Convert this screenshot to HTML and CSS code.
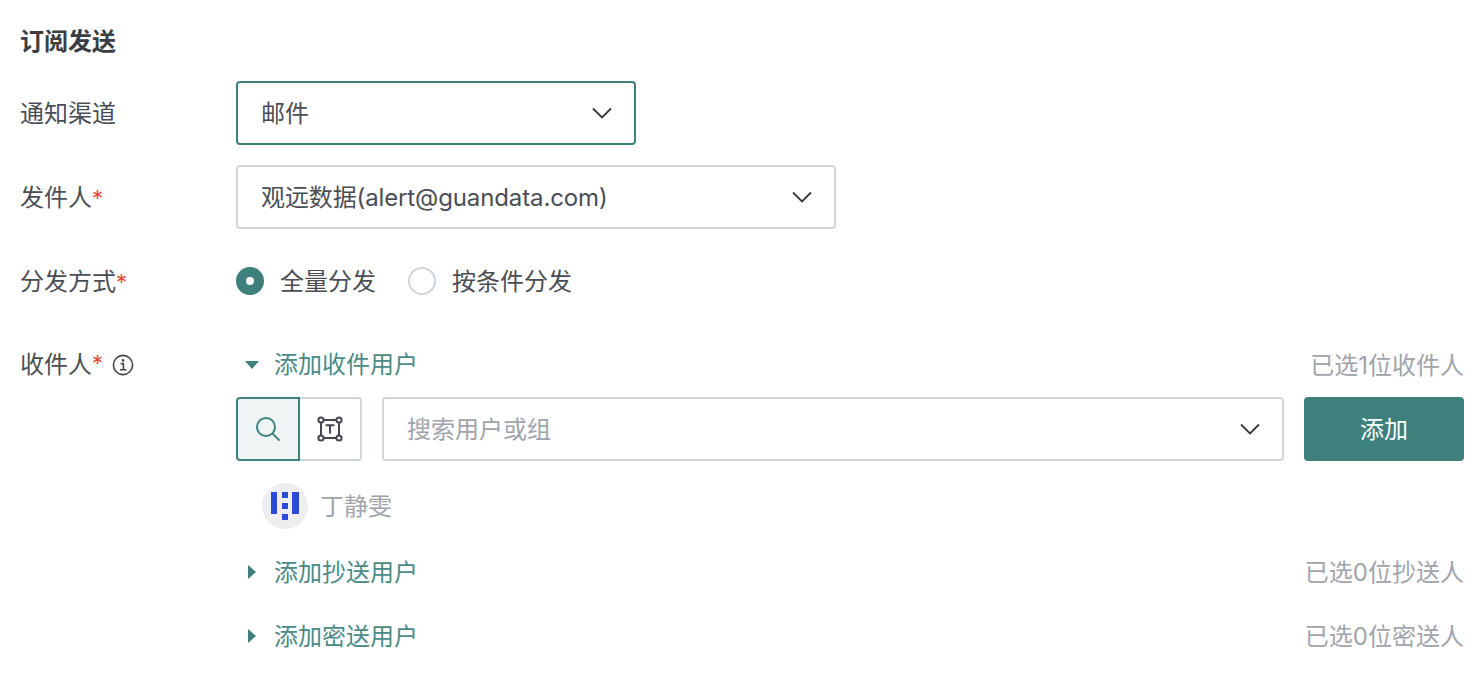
FILE: index.html
```html
<!DOCTYPE html>
<html lang="zh-CN">
<head>
    <meta charset="UTF-8">
    <meta name="viewport" content="width=device-width, initial-scale=1.0">
    <title>订阅发送</title>
    <link rel="stylesheet" href="styles.css">
</head>
<body>
    <div class="page">
        <h1 class="title">订阅发送</h1>

        <div class="form-row row-channel">
            <div class="label">通知渠道</div>
            <div class="select select-focus select-channel">
                <span>邮件</span>
                <svg class="chevron" viewBox="0 0 20 12"><path d="M1 1.5l9 9 9-9"/></svg>
            </div>
        </div>

        <div class="form-row row-sender">
            <div class="label">发件人<i class="req">*</i></div>
            <div class="select select-sender">
                <span class="sender-text">观远数据(alert@guandata.com)</span>
                <svg class="chevron" viewBox="0 0 20 12"><path d="M1 1.5l9 9 9-9"/></svg>
            </div>
        </div>

        <div class="form-row row-radio">
            <div class="label">分发方式<i class="req">*</i></div>
            <div class="radios">
                <span class="radio radio-on"></span>
                <span class="radio-text">全量分发</span>
                <span class="radio"></span>
                <span class="radio-text">按条件分发</span>
            </div>
        </div>

        <div class="form-row row-users">
            <div class="label label-users">
                收件人<i class="req">*</i>
                <svg class="info" viewBox="0 0 22 22">
                    <circle cx="11" cy="11" r="9.6"/>
                    <path d="M8.6 9.6h2.8v6M8 15.8h6.4"/>
                    <circle class="dot" cx="11" cy="6.4" r="1.3"/>
                </svg>
            </div>
            <div class="users">
                <div class="section-head section-first">
                    <span class="arrow-down"></span>
                    <span class="section-title">添加收件用户</span>
                    <span class="count">已选1位收件人</span>
                </div>

                <div class="search-row">
                    <div class="toggle">
                        <span class="toggle-btn toggle-on">
                            <svg viewBox="0 0 26 26" class="icon-search">
                                <circle cx="11" cy="11" r="9"/>
                                <path d="M17.6 17.6l7 7"/>
                            </svg>
                        </span>
                        <span class="toggle-btn">
                            <svg viewBox="0 0 26 26" class="icon-text">
                                <path d="M4 6.5v13M22 6.5v13M6.5 4h13M6.5 22h13"/>
                                <circle cx="4" cy="4" r="2.6"/>
                                <circle cx="22" cy="4" r="2.6"/>
                                <circle cx="4" cy="22" r="2.6"/>
                                <circle cx="22" cy="22" r="2.6"/>
                                <path d="M8.6 9.2h8.8M13 9.2v8.4"/>
                            </svg>
                        </span>
                    </div>
                    <div class="select select-search">
                        <span class="placeholder">搜索用户或组</span>
                        <svg class="chevron" viewBox="0 0 20 12"><path d="M1 1.5l9 9 9-9"/></svg>
                    </div>
                    <button class="btn-add">添加</button>
                </div>

                <div class="user-item">
                    <span class="avatar">
                        <svg viewBox="0 0 28 28">
                            <rect x="0" y="0" width="6" height="22"/>
                            <rect x="21" y="0" width="7" height="22"/>
                            <rect x="11" y="0" width="6" height="6"/>
                            <rect x="11" y="11" width="6" height="6"/>
                            <rect x="11" y="22" width="6" height="6"/>
                        </svg>
                    </span>
                    <span class="user-name">丁静雯</span>
                </div>

                <div class="section-head section-cc">
                    <span class="arrow-right"></span>
                    <span class="section-title">添加抄送用户</span>
                    <span class="count">已选0位抄送人</span>
                </div>
                <div class="section-head section-bcc">
                    <span class="arrow-right"></span>
                    <span class="section-title">添加密送用户</span>
                    <span class="count">已选0位密送人</span>
                </div>
            </div>
        </div>
    </div>
</body>
</html>
```

FILE: styles.css
```css
* {
    margin: 0;
    padding: 0;
    box-sizing: border-box;
}

body {
    background: #fff;
    color: #4a4e54;
    font-family: Inter, "Noto Sans CJK SC", sans-serif;
    font-size: 24px;
    line-height: 32px;
    overflow: hidden;
}

.page {
    padding: 26px 14px 0 20px;
}

.title {
    font-size: 24px;
    font-weight: 700;
    line-height: 32px;
    color: #3a3e43;
}

.form-row {
    display: flex;
    align-items: center;
}

.row-channel {
    margin-top: 23px;
}

.row-sender {
    margin-top: 20px;
}

.row-radio {
    margin-top: 20px;
    height: 64px;
}

.row-users {
    align-items: flex-start;
    margin-top: 36px;
}

/* text sits a pixel lower than the box centre */
.label,
.select span,
.radio-text,
.section-title,
.count,
.user-name,
.btn-add {
    padding-top: 2px;
}

.label {
    width: 216px;
    flex-shrink: 0;
}

.label-users {
    display: flex;
    align-items: center;
    height: 32px;
    padding-top: 0;
}

.req {
    color: #e5483d;
    font-style: normal;
    font-size: 22px;
    margin-top: -4px;
}

.label-users .info {
    margin-top: 0;
}

.info {
    width: 22px;
    height: 22px;
    margin-left: 9px;
    fill: none;
    stroke: #43474d;
    stroke-width: 1.6;
}

.info .dot {
    fill: #43474d;
    stroke: none;
}

.select {
    display: flex;
    align-items: center;
    justify-content: space-between;
    height: 64px;
    padding: 0 22px 0 23px;
    border: 2px solid #d0d5da;
    border-radius: 4px;
    background: #fff;
}

.select-focus {
    border-color: #3e807c;
}

.select-channel {
    width: 400px;
}

.select-sender {
    width: 600px;
}

.sender-text {
    letter-spacing: -0.12px;
}

.select-search {
    flex: 1;
    margin: 0 20px;
}

.chevron {
    width: 20px;
    height: 12px;
    fill: none;
    stroke: #33373c;
    stroke-width: 1.8;
}

.radios {
    display: flex;
    align-items: center;
}

.radio {
    width: 28px;
    height: 28px;
    border: 2px solid #d0d5da;
    border-radius: 50%;
}

.radio-on {
    border: 10px solid #3e807c;
    background: #fff;
}

.radio-text {
    margin-left: 16px;
    margin-right: 32px;
}

.users {
    flex: 1;
}

.section-head {
    display: flex;
    align-items: center;
    height: 32px;
}

.section-first .section-title {
    padding-top: 0;
}

.section-title {
    color: #4a8b87;
    margin-left: 15px;
}

.arrow-down {
    width: 0;
    height: 0;
    margin-left: 9px;
    border-left: 7px solid transparent;
    border-right: 7px solid transparent;
    border-top: 8px solid #3e807c;
}

.arrow-right {
    width: 0;
    height: 0;
    margin-left: 12px;
    margin-right: 3px;
    border-top: 7px solid transparent;
    border-bottom: 7px solid transparent;
    border-left: 8px solid #3e807c;
}

.count {
    margin-left: auto;
    color: #a0a4aa;
}

.search-row {
    display: flex;
    margin-top: 16px;
}

.toggle {
    display: flex;
}

.toggle-btn {
    display: flex;
    align-items: center;
    justify-content: center;
    width: 62px;
    height: 64px;
    border: 2px solid #d0d5da;
    border-left: 0;
    border-radius: 0 4px 4px 0;
}

.toggle-on {
    width: 64px;
    border: 2px solid #3e807c;
    border-radius: 4px 0 0 4px;
    background: #eff4f4;
}

.icon-search {
    width: 26px;
    height: 26px;
    fill: none;
    stroke: #3e807c;
    stroke-width: 2;
}

.icon-text {
    width: 26px;
    height: 26px;
    fill: none;
    stroke: #43474d;
    stroke-width: 2;
}

.placeholder {
    color: #a0a4aa;
}

.btn-add {
    width: 160px;
    height: 64px;
    border: 0;
    border-radius: 4px;
    background: #3e807c;
    color: #fff;
    font: inherit;
}

.user-item {
    display: flex;
    align-items: center;
    margin-top: 22px;
    margin-left: 26px;
}

.avatar {
    display: flex;
    align-items: center;
    justify-content: center;
    width: 46px;
    height: 46px;
    border-radius: 50%;
    background: #eeeeef;
}

.avatar svg {
    width: 28px;
    height: 28px;
    fill: #2a4bd7;
}

.user-name {
    margin-left: 12px;
    color: #a0a4aa;
}

.section-cc {
    margin-top: 27px;
}

.section-bcc {
    margin-top: 32px;
}
```
